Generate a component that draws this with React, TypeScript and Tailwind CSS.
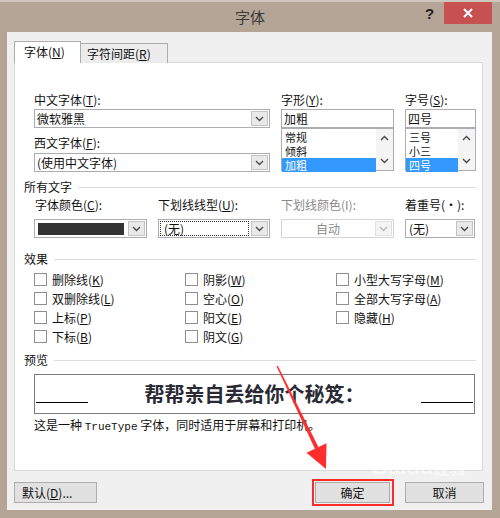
import React from "react";

const Chevron = ({ up = false, color = "#4a4a4a" }: { up?: boolean; color?: string }) => (
  <svg width="9" height="6" viewBox="0 0 9 6">
    <path
      d={up ? "M1 5 L4.5 1.5 L8 5" : "M1 1 L4.5 4.5 L8 1"}
      fill="none"
      stroke={color}
      strokeWidth="1.4"
    />
  </svg>
);

function DropBtn({ disabled }: { disabled?: boolean }) {
  return (
    <div
      className={`m-px w-[17px] flex items-center justify-center border ${
        disabled ? "border-[#e0e0e0] bg-[#f4f4f4]" : "border-[#c4c4c4] bg-[#e9e9e9]"
      }`}
    >
      <Chevron color={disabled ? "#b8b8b8" : "#4a4a4a"} />
    </div>
  );
}

function Group({ label }: { label: string }) {
  return (
    <div className="flex items-center h-[16px] pl-[9px] pr-[6px]">
      <span>{label}</span>
      <div className="flex-1 h-px bg-[#dcdcdc] ml-[6px]" />
    </div>
  );
}

function Check({ children }: { children: React.ReactNode }) {
  return (
    <div className="flex items-center h-[19px]">
      <div className="w-[13px] h-[13px] border border-[#8e8f8f] bg-white" />
      <span className="ml-[5px]">{children}</span>
    </div>
  );
}

function ListBox({ items, selected }: { items: string[]; selected: number }) {
  return (
    <div className="flex h-[43px] border border-[#abadb3] bg-white">
      <div className="flex-1 text-[11px] leading-[14px] pt-px">
        {items.map((it, i) => (
          <div
            key={it}
            className={`pl-[3px] h-[14px] ${i === selected ? "bg-[#3399ff] text-white" : ""}`}
          >
            {it}
          </div>
        ))}
      </div>
      <div className="w-[17px] flex flex-col items-center justify-between py-[6px] bg-[#f4f4f4]">
        <Chevron up />
        <Chevron />
      </div>
    </div>
  );
}

const U = ({ c }: { c: string }) => <span className="underline">{c}</span>;

export default function App() {
  return (
    <div className="relative w-[500px] h-[518px] bg-[#b5a596] font-['Noto_Sans_CJK_SC',sans-serif] text-[12px] text-[#111] overflow-hidden">
      <div className="h-[2px] bg-[#cfc6bd]" />
      {/* title bar */}
      <div className="h-[30px] flex items-center justify-center">
        <span className="text-[15px] text-[#3a3a3a]">字体</span>
      </div>
      <div className="absolute left-[425px] top-[3px] text-[15px] font-bold text-[#222] font-['Liberation_Sans',sans-serif]">
        ?
      </div>
      <div className="absolute left-[444px] top-[2px] w-[48px] h-[22px] bg-[#c75050] flex items-center justify-center">
        <svg width="10" height="10" viewBox="0 0 10 10">
          <path d="M1 1 L9 9 M9 1 L1 9" stroke="#fff" strokeWidth="2" />
        </svg>
      </div>

      {/* client */}
      <div className="ml-[7px] w-[485px] h-[478px] bg-[#f0f0f0] pt-[9px] pl-[7px]">
        {/* tabs */}
        <div className="flex items-end h-[22px]">
          <div className="relative z-10 w-[67px] h-[22px] bg-white border border-b-0 border-[#adadad] pl-[9px] leading-[20px]">
            字体(<U c="N" />)
          </div>
          <div className="w-[87px] h-[20px] bg-[#ececec] border border-l-0 border-b-0 border-[#adadad] pl-[6px] leading-[19px]">
            字符间距(<U c="R" />)
          </div>
        </div>

        {/* panel */}
        <div className="-mt-px w-[469px] h-[409px] border border-[#d9d9d9] bg-white">
          {/* row A */}
          <div className="flex pl-[19px] pt-[29px]">
            <div className="w-[236px]">
              <div className="h-[17px] leading-[16px]">
                中文字体(<U c="T" />):
              </div>
              <div className="flex h-[19px] border border-[#abadb3] bg-white">
                <div className="flex-1 pl-[2px] leading-[17px]">微软雅黑</div>
                <DropBtn />
              </div>
              <div className="mt-[6px] h-[17px] leading-[18px]">
                西文字体(<U c="F" />):
              </div>
              <div className="mt-[2px] flex h-[19px] border border-[#abadb3] bg-white">
                <div className="flex-1 pl-[2px] leading-[17px]">(使用中文字体)</div>
                <DropBtn />
              </div>
            </div>
            <div className="w-[113px] ml-[11px]">
              <div className="h-[17px] leading-[16px]">
                字形(<U c="Y" />):
              </div>
              <div className="h-[19px] border border-[#abadb3] bg-white pl-[2px] leading-[17px]">加粗</div>
              <ListBox items={["常规", "倾斜", "加粗"]} selected={2} />
            </div>
            <div className="w-[71px] ml-[11px]">
              <div className="h-[17px] leading-[16px]">
                字号(<U c="S" />):
              </div>
              <div className="h-[19px] border border-[#abadb3] bg-white pl-[2px] leading-[17px]">四号</div>
              <ListBox items={["三号", "小三", "四号"]} selected={2} />
            </div>
          </div>

          <div className="mt-[7px]">
            <Group label="所有文字" />
          </div>

          {/* row B */}
          <div className="flex pl-[19px] mt-[2px]">
            <div className="w-[113px]">
              <div className="h-[16px] leading-[16px] pl-px">
                字体颜色(<U c="C" />):
              </div>
              <div className="mt-[6px] flex h-[19px] border border-[#abadb3] bg-white">
                <div className="flex-1 flex items-center pl-[3px] pr-[3px]">
                  <div className="w-full h-[12px] bg-[#333333]" />
                </div>
                <DropBtn />
              </div>
            </div>
            <div className="w-[112px] ml-[11px]">
              <div className="h-[16px] leading-[16px]">
                下划线线型(<U c="U" />):
              </div>
              <div className="mt-[6px] flex h-[19px] border border-[#abadb3] bg-white">
                <div className="flex-1 p-[1px]">
                  <div className="h-full outline-1 outline-dotted outline-[#333] -outline-offset-1 pl-[4px] leading-[15px]">
                    (无)
                  </div>
                </div>
                <DropBtn />
              </div>
            </div>
            <div className="w-[113px] ml-[11px]">
              <div className="h-[16px] leading-[16px] text-[#8a8a8a]">下划线颜色(I):</div>
              <div className="mt-[6px] flex h-[19px] border border-[#d5d5d5] bg-white">
                <div className="flex-1 text-center text-[#8a8a8a] leading-[17px]">自动</div>
                <DropBtn disabled />
              </div>
            </div>
            <div className="w-[70px] ml-[11px]">
              <div className="h-[16px] leading-[16px] whitespace-nowrap">着重号(·):</div>
              <div className="mt-[6px] flex h-[19px] border border-[#abadb3] bg-white">
                <div className="flex-1 pl-[3px] leading-[17px]">(无)</div>
                <DropBtn />
              </div>
            </div>
          </div>

          <div className="mt-[13px]">
            <Group label="效果" />
          </div>

          {/* effects */}
          <div className="flex pl-[19px] mt-[3px]">
            <div className="w-[151px]">
              <Check>删除线(<U c="K" />)</Check>
              <Check>双删除线(<U c="L" />)</Check>
              <Check>上标(<U c="P" />)</Check>
              <Check>下标(<U c="B" />)</Check>
            </div>
            <div className="w-[151px]">
              <Check>阴影(<U c="W" />)</Check>
              <Check>空心(<U c="O" />)</Check>
              <Check>阳文(<U c="E" />)</Check>
              <Check>阴文(<U c="G" />)</Check>
            </div>
            <div>
              <Check>小型大写字母(<U c="M" />)</Check>
              <Check>全部大写字母(<U c="A" />)</Check>
              <Check>隐藏(<U c="H" />)</Check>
            </div>
          </div>

          <div className="mt-[6px]">
            <Group label="预览" />
          </div>

          {/* preview */}
          <div className="ml-[19px] mt-[6px] w-[441px] h-[40px] border border-[#7a7a7a] bg-white flex items-center px-[1px]">
            <div className="w-[52px] h-px bg-black mt-[16px]" />
            <div className="flex-1 text-center text-[20px] font-bold text-[#2a2a35]">
              帮帮亲自丢给你个秘笈：
            </div>
            <div className="w-[52px] h-px bg-black mt-[16px]" />
          </div>
          <div className="ml-[19px] mt-[3px] h-[16px] leading-[16px]">
            这是一种 <span className="font-['Liberation_Mono',monospace] text-[11px]">TrueType</span>{" "}
            字体，同时适用于屏幕和打印机。
          </div>
        </div>

        {/* buttons */}
        <div className="mt-[11px] w-[470px] flex">
          <div className="w-[83px] h-[21px] bg-[#e1e1e1] border border-[#adadad] pl-[7px] leading-[19px]">
            默认(<U c="D" />)...
          </div>
          <div className="flex-1" />
          <div className="relative w-[75px] h-[21px] bg-[#e1e1e1] border border-[#adadad] text-center leading-[19px]">
            确定
            <div className="absolute -left-[4px] -top-[4px] w-[82px] h-[27px] border-2 border-[#ff2b2b]" />
          </div>
          <div className="ml-[15px] w-[79px] h-[21px] bg-[#e1e1e1] border border-[#adadad] text-center leading-[19px]">
            取消
          </div>
        </div>
      </div>

      {/* annotation arrow */}
      <svg className="absolute left-0 top-0 pointer-events-none" width="500" height="518">
        <polygon points="276.5,366.2 277.8,365.7 318.5,447.3 315,449" fill="#ff2d2d" />
        <polygon points="326,469 306.5,452.8 326.5,443.2" fill="#ff2d2d" />
      </svg>

      {/* watermark */}
      <div className="absolute left-[372px] top-[456px] pointer-events-none text-white/60 font-['Liberation_Sans',sans-serif] font-bold text-[22px] leading-none">
        Baidu<span className="font-['Noto_Sans_CJK_SC',sans-serif] text-[16px]">经验</span>
      </div>
    </div>
  );
}
